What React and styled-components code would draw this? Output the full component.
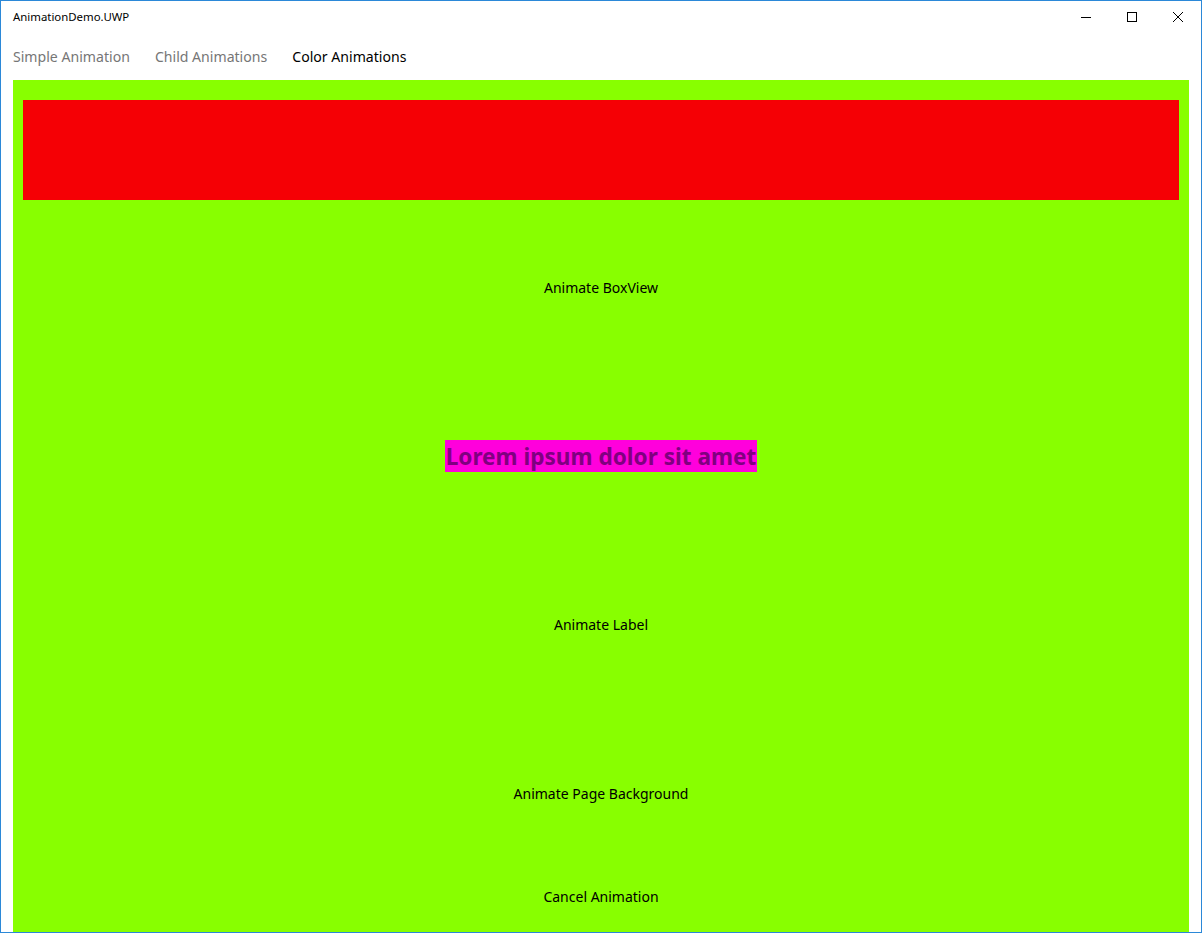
import styled, { createGlobalStyle } from "styled-components";

const GlobalStyle = createGlobalStyle`
  html, body {
    margin: 0;
    padding: 0;
    background: #ffffff;
  }
  body {
    font-family: "Noto Sans", "Open Sans", sans-serif;
  }
`;

const Window = styled.div`
  box-sizing: border-box;
  width: 1202px;
  height: 933px;
  border: 1px solid #2b88d8;
  background: #ffffff;
  display: flex;
  flex-direction: column;
  overflow: hidden;
`;

const TitleBar = styled.div`
  height: 31px;
  display: flex;
  align-items: center;
  justify-content: space-between;
  flex-shrink: 0;
`;

const Title = styled.div`
  padding-left: 12px;
  font-size: 11.4px;
  color: #000000;
  line-height: 1;
`;

const Controls = styled.div`
  display: flex;
  height: 100%;
`;

const ControlButton = styled.div`
  width: 46px;
  height: 100%;
  display: flex;
  align-items: center;
  justify-content: center;
`;

const Tabs = styled.div`
  height: 48px;
  display: flex;
  align-items: center;
  gap: 25px;
  padding-left: 12px;
  flex-shrink: 0;
`;

const Tab = styled.div`
  font-size: 14.1px;
  color: ${({ active }) => (active ? "#000000" : "#767676")};
  line-height: 1;
  padding-top: 3px;
`;

const Page = styled.div`
  flex: 1;
  margin: 0 12px;
  background: #88ff00;
  padding: 20px 10px 0;
  display: flex;
  flex-direction: column;
`;

const BoxView = styled.div`
  height: 100px;
  background: #f50005;
  flex-shrink: 0;
`;

const Row = styled.div`
  height: ${({ h }) => h}px;
  display: flex;
  align-items: center;
  justify-content: center;
  flex-shrink: 0;
`;

const ActionButton = styled.div`
  font-size: 14px;
  color: #000000;
  line-height: 1;
  padding-top: 2px;
`;

const Lorem = styled.div`
  background: #ff00dc;
  color: #800080;
  font-weight: 700;
  font-size: 22.6px;
  height: 32px;
  display: flex;
  align-items: center;
  padding: 0 1px;
`;

const Icon = ({ children }) => (
  <svg width="12" height="12" viewBox="0 0 12 12" fill="none" stroke="#000" strokeWidth="1">
    {children}
  </svg>
);

export default function App() {
  return (
    <>
      <GlobalStyle />
      <Window>
        <TitleBar>
          <Title>AnimationDemo.UWP</Title>
          <Controls>
            <ControlButton>
              <Icon>
                <path d="M1 6.5h10" />
              </Icon>
            </ControlButton>
            <ControlButton>
              <Icon>
                <rect x="1.5" y="1.5" width="9" height="9" />
              </Icon>
            </ControlButton>
            <ControlButton>
              <Icon>
                <path d="M1 1l10 10M11 1L1 11" />
              </Icon>
            </ControlButton>
          </Controls>
        </TitleBar>
        <Tabs>
          <Tab>Simple Animation</Tab>
          <Tab>Child Animations</Tab>
          <Tab active>Color Animations</Tab>
        </Tabs>
        <Page>
          <BoxView />
          <Row h={174}>
            <ActionButton>Animate BoxView</ActionButton>
          </Row>
          <Row h={164}>
            <Lorem>Lorem ipsum dolor sit amet</Lorem>
          </Row>
          <Row h={172}>
            <ActionButton>Animate Label</ActionButton>
          </Row>
          <Row h={166}>
            <ActionButton>Animate Page Background</ActionButton>
          </Row>
          <Row h={40}>
            <ActionButton>Cancel Animation</ActionButton>
          </Row>
        </Page>
      </Window>
    </>
  );
}
